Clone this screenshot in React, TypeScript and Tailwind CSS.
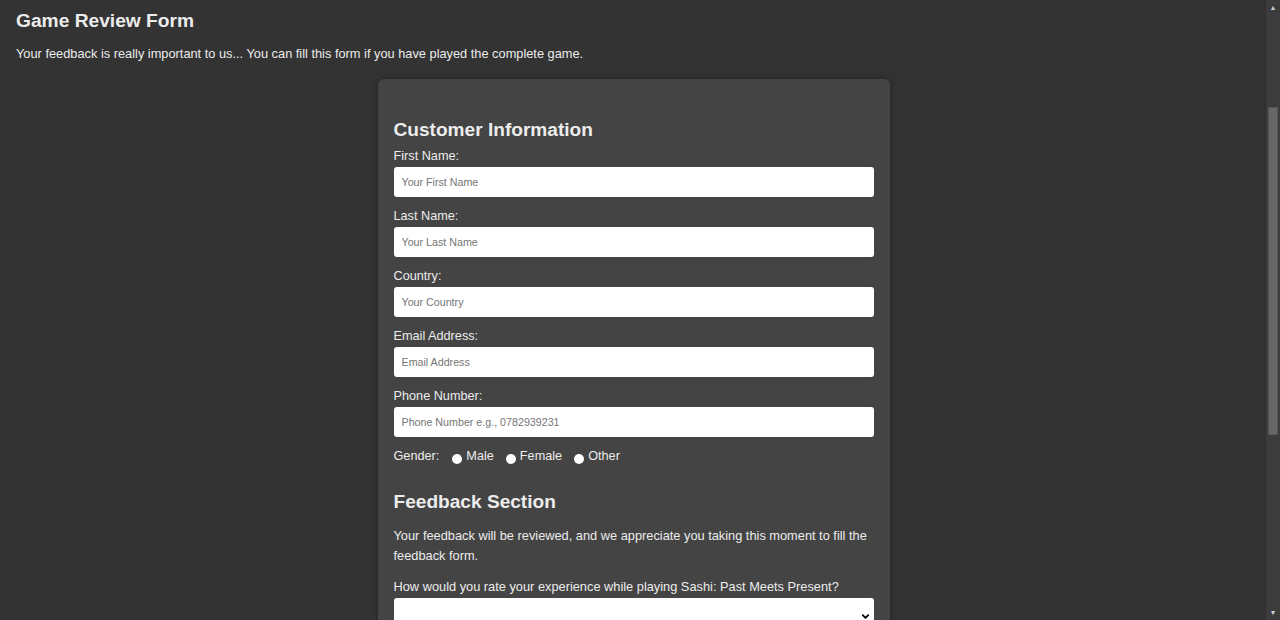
import { ChevronDown } from "lucide-react"

const FIELDS = [
  { label: "First Name:", placeholder: "Your First Name" },
  { label: "Last Name:", placeholder: "Your Last Name" },
  { label: "Country:", placeholder: "Your Country" },
  { label: "Email Address:", placeholder: "Email Address" },
  { label: "Phone Number:", placeholder: "Phone Number e.g., 0782939231" },
]

export default function App() {
  return (
    <div className="flex h-[620px] overflow-hidden bg-[#333333] text-[#ececec] font-['Liberation_Sans',Arial,sans-serif]">
      <main className="flex-1 overflow-hidden">
        <header className="px-4 pt-[9px]">
          <h1 className="text-[19.2px] leading-6 font-bold">Game Review Form</h1>
          <p className="mt-[13px] text-[12.8px] leading-4">
            Your feedback is really important to us... You can fill this form if you have played the complete game.
          </p>
        </header>

        <form className="w-[512px] mx-auto translate-x-px mt-[17px] mb-10 bg-[#444444] rounded-md px-4 pt-[38px] pb-6 shadow-[0_0_6px_rgba(0,0,0,0.35)]">
          {/* Customer info */}
          <h2 className="text-[19.1px] leading-6 font-bold pt-px mb-[5px]">Customer Information</h2>
          {FIELDS.map((f) => (
            <div key={f.label} className="mb-[10px]">
              <label className="block text-[12.7px] leading-4 pt-px mb-[3px]">{f.label}</label>
              <input
                type="text"
                placeholder={f.placeholder}
                className="block w-[480px] h-[30px] bg-white rounded-[3px] px-2 text-[10.7px] text-black placeholder:text-[#757575] outline-none"
              />
            </div>
          ))}

          <div className="flex items-center text-[12.7px] leading-4 pt-px">
            <span className="mr-[13px]">Gender:</span>
            {["Male", "Female", "Other"].map((g) => (
              <label key={g} className="flex items-center mr-[12px]">
                <input
                  type="radio"
                  name="gender"
                  className="appearance-none w-[10px] h-[10px] rounded-full bg-white mt-[5px] mr-1"
                />
                {g}
              </label>
            ))}
          </div>

          {/* Feedback */}
          <h2 className="text-[19.1px] leading-6 font-bold mt-[26px]">Feedback Section</h2>
          <p className="text-[12.8px] leading-5 mt-3">
            Your feedback will be reviewed, and we appreciate you taking this moment to fill the feedback form.
          </p>
          <label className="block text-[12.8px] leading-4 mt-[13px] mb-[3px]">
            How would you rate your experience while playing Sashi: Past Meets Present?
          </label>
          <div className="relative w-[480px]">
            <select className="appearance-none block w-full h-[30px] bg-white rounded-[3px] px-2 text-[11px] text-black outline-none">
              <option value=""></option>
              <option>Excellent</option>
              <option>Good</option>
              <option>Average</option>
              <option>Poor</option>
            </select>
            <ChevronDown className="absolute right-[3px] top-[13px] w-[11px] h-[11px] text-black pointer-events-none" strokeWidth={4} />
          </div>

          <label className="block text-[12.8px] leading-4 mt-[14px] mb-1">What did you like most about the game?</label>
          <textarea className="block w-[480px] h-[90px] bg-white rounded-[3px] p-2 text-[11px] text-black outline-none resize-none" placeholder="Your comments" />

          <button type="button" className="mt-5 w-[480px] h-9 rounded-[3px] bg-[#2e7d32] text-white text-[14px] font-bold">
            Submit
          </button>
        </form>
      </main>

      {/* page scrollbar */}
      <aside className="w-[15px] flex flex-col items-center bg-[#3c3c3c] border-l border-[#2e2e2e]">
        <span className="h-[15px] text-[7px] leading-[15px] text-[#d0d0d0]">▲</span>
        <div className="w-full flex-1 flex flex-col px-[2px] pt-[92px] pb-[170px]">
          <div className="flex-1 bg-[#676767] border border-[#555]" />
        </div>
        <span className="h-[15px] text-[7px] leading-[15px] text-[#d0d0d0]">▼</span>
      </aside>
    </div>
  )
}
